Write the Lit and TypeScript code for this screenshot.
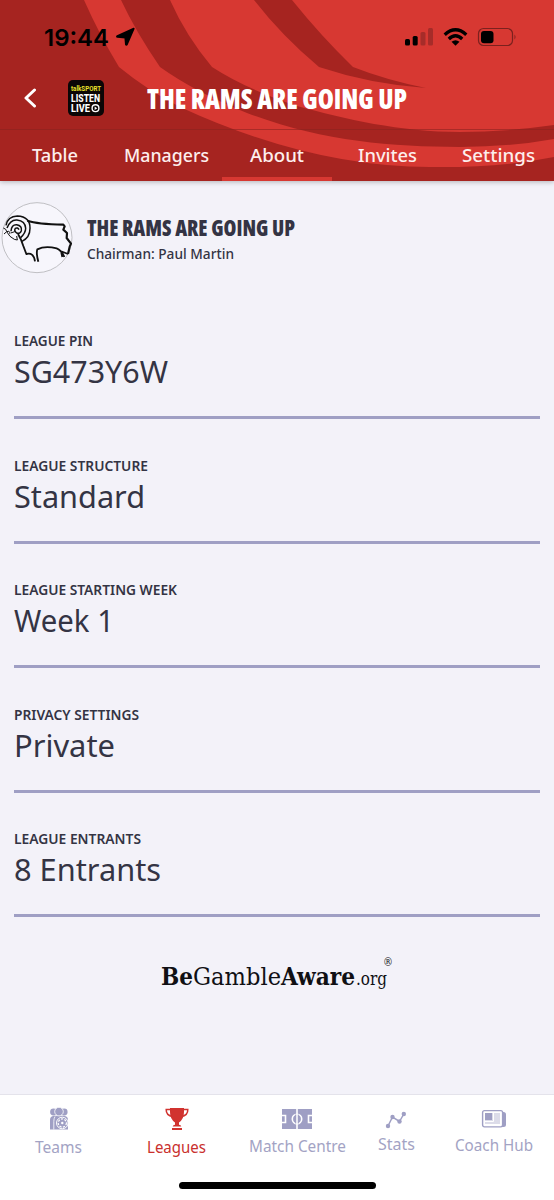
import { LitElement, html, css, svg } from "lit";
import { customElement, property } from "lit/decorators.js";

@customElement("fit-text")
class FitText extends LitElement {
  @property() text = "";
  @property({ type: Number }) w = 100;
  @property({ type: Number }) h = 20;
  @property({ type: Number }) base = 15;
  static styles = css`
    :host { display: block; }
    svg { display: block; overflow: visible; }
    text { fill: currentColor; white-space: pre; }
  `;
  render() {
    return html`<svg width=${this.w} height=${this.h}>
      <text x="0" y=${this.base} textLength=${this.w} lengthAdjust="spacingAndGlyphs">${this.text}</text>
    </svg>`;
  }
}

const fit = (text: string, w: number, h: number, base: number, cls: string) =>
  html`<fit-text class=${cls} .text=${text} .w=${w} .h=${h} .base=${base}></fit-text>`;

const tabs = [
  { label: "Table", w: 46 },
  { label: "Managers", w: 85 },
  { label: "About", w: 54, active: true },
  { label: "Invites", w: 59 },
  { label: "Settings", w: 73 },
];

const fields = [
  { label: "LEAGUE PIN", lw: 79, value: "SG473Y6W", vw: 154 },
  { label: "LEAGUE STRUCTURE", lw: 134, value: "Standard", vw: 131 },
  { label: "LEAGUE STARTING WEEK", lw: 163, value: "Week 1", vw: 100 },
  { label: "PRIVACY SETTINGS", lw: 125, value: "Private", vw: 101 },
  { label: "LEAGUE ENTRANTS", lw: 127, value: "8 Entrants", vw: 147 },
];

const teamsIcon = svg`<svg width="22" height="24" viewBox="0 0 22 24">
  <g fill="#9f9fc4">
    <circle cx="5.500" cy="5" r="3.400"/><circle cx="16.200" cy="5" r="3.400"/>
    <path d="M2 22.500V13q0-4 4-4.300h10q4 .3 4 4.300v9.500z"/>
    <circle cx="11" cy="4.600" r="4.300" stroke="#fff" stroke-width=".8"/>
  </g>
  <path d="M7 9.500q-1.200 2-1.200 5v8" fill="none" stroke="#fff" stroke-width=".8"/>
  <circle cx="14.300" cy="16" r="5.800" fill="#9f9fc4" stroke="#fff" stroke-width="1"/>
  <circle cx="14.300" cy="16" r="4.100" fill="none" stroke="#fff" stroke-width="1.200" stroke-dasharray="2.200 1.300"/>
  <circle cx="14.300" cy="16" r="1.200" fill="#fff"/>
</svg>`;

const cupIcon = svg`<svg width="24" height="24" viewBox="0 0 24 24">
  <path d="M5 1h14v4q0 7-5 10.500v2.300q2 .3 2.300 1.700H7.700q.3-1.400 2.300-1.700v-2.300Q5 12 5 5zM7 21h10v2H7z" fill="#d1332f"/>
  <path d="M5.500 2.500H1.200q-.3 6 6.800 7.200M18.500 2.500h4.300q.3 6-6.800 7.200" fill="none" stroke="#d1332f" stroke-width="1.500"/>
</svg>`;

const pitchIcon = svg`<svg width="30" height="22" viewBox="0 0 30 22">
  <path d="M0 1h30v20H0z" fill="#9f9fc4"/>
  <g fill="none" stroke="#fff" stroke-width="1.600">
    <path d="M15 0v22M0 7.500h3.500v7H0M30 7.500h-3.500v7H30"/><circle cx="15" cy="11" r="4.700"/>
  </g>
  <path d="M13.200 6.500h3.600v9h-3.600z" fill="#9f9fc4"/><path d="M15 6v10" stroke="#fff" stroke-width="1.500"/>
</svg>`;

const statsIcon = svg`<svg width="22" height="18" viewBox="0 0 22 18">
  <path d="M3 15 7.500 6 14.500 10.500 18.800 3" fill="none" stroke="#9f9fc4" stroke-width="1.500"/>
  <g fill="#9f9fc4"><circle cx="3" cy="15" r="2.200"/><circle cx="7.500" cy="6" r="2.200"/><circle cx="14.500" cy="10.500" r="2.200"/><circle cx="18.800" cy="3" r="2.200"/></g>
</svg>`;

const newsIcon = svg`<svg width="26" height="20" viewBox="0 0 26 20">
  <path d="M21 3h1.500q2.500 0 2.500 2.500v10q0 2.500-2.500 2.500H20z" fill="#9f9fc4"/>
  <rect x="1.600" y="1.600" width="20" height="16.300" rx="1.800" fill="#fff" stroke="#9f9fc4" stroke-width="1.400"/>
  <path d="M11 4h8v11H4v-4h7z" fill="#dcdce9"/>
  <path d="M4 4h7v7H4z" fill="#9f9fc4"/><path d="M12.500 4v8.500H4" fill="none" stroke="#fff"/>
</svg>`;

const nav = [
  { label: "Teams", w: 47, icon: teamsIcon, cls: "teams", base: 14 },
  { label: "Leagues", w: 59, icon: cupIcon, cls: "leagues", base: 14 },
  { label: "Match Centre", w: 97, icon: pitchIcon, cls: "match", base: 14 },
  { label: "Stats", w: 37, icon: statsIcon, cls: "stats", base: 14 },
  { label: "Coach Hub", w: 78, icon: newsIcon, cls: "hub", base: 14 },
];

@customElement("app-root")
class AppRoot extends LitElement {
  static styles = css`
    :host {
      display: flex; flex-direction: column; width: 554px; height: 1200px; overflow: hidden;
      background: #f3f2f9; color: #343444; font-family: "Noto Sans", "Open Sans", sans-serif;
    }
    header { position: relative; z-index: 1; flex: none; height: 181px; box-sizing: border-box;
      display: flex; flex-direction: column; background: #a62420; color: #fff; box-shadow: 0 1px 5px #0004; }
    .swirl { position: absolute; left: 0; top: 0; }
    .status { position: relative; height: 74px; box-sizing: border-box; padding: 24px 37px 0 44px;
      display: flex; align-items: flex-start; color: #000; }
    .clock { font: 600 23.500px Inter, sans-serif; }
    .arrow { margin: 3px 0 0 6px; }
    .radios { margin: 3px 0 0 auto; }
    .bar { position: relative; height: 55px; display: flex; align-items: flex-start; border-bottom: 1px solid #8a231f99; }
    .back { margin: 14px 0 0 22px; }
    .live { margin: 6px 0 0 30px; width: 36px; height: 36px; box-sizing: border-box; border-radius: 5px; background: #0b0606;
      padding: 4px 3px 0; display: flex; flex-direction: column; }
    .talk { color: #e9e12c; font: 700 8px Roboto, sans-serif; }
    .listen { font: 800 10px Roboto, sans-serif; }
    .row { display: flex; gap: 1px; }
    .title { margin: 9px 0 0 43px; font: 800 28.500px "Open Sans"; font-stretch: 75%; }
    .tabs { position: relative; flex: 1; display: grid; grid-template-columns: repeat(5, 1fr); }
    .tab { display: flex; justify-content: center; padding-top: 13px; font-size: 18.800px; font-weight: 550; color: #fdeeed; }
    .tab.active { border-bottom: 4px solid #d73832; }
    main { flex: 1; display: flex; flex-direction: column; }
    .league { display: flex; height: 113.500px; box-sizing: border-box; padding-top: 17px; gap: 10px; }
    .name { font: 800 23.500px "Open Sans"; font-stretch: 75%; margin-top: 16px; }
    .chair { font-size: 14.800px; font-weight: 500; margin-top: 7px; }
    .field { height: 124.500px; box-sizing: border-box; margin: 0 14px; padding-top: 35.500px; border-bottom: 3px solid #9f9fc4; }
    .label { font-size: 14.200px; font-weight: 600; }
    .value { font-size: 31px; font-weight: 400; margin-top: 8px; }
    .aware { display: flex; margin: 35px 0 0 161px; color: #101014; font-family: "DejaVu Serif", serif; font-size: 24px; }
    .bold { font-weight: 700; }
    .org { font-size: 19px; margin-left: 1px; }
    .reg { font-size: 11px; margin-left: -4px; }
    nav { position: relative; flex: none; height: 106px; box-sizing: border-box; background: #fff; border-top: 1px solid #e4e3eb;
      color: #a3a3c4; }
    .items { display: grid; grid-template-columns: 116px 120px 122px 76px 120px; }
    .item { display: flex; flex-direction: column; align-items: center; font-size: 16px; }
    .item svg { display: block; flex: none; }
    .teams { padding: 12px 0 0 1px; gap: 8px; }
    .leagues { padding: 12px 0 0 1px; gap: 8px; color: #c9302d; }
    .match { padding-top: 13px; gap: 8px; }
    .stats { padding-top: 16px; gap: 7px; }
    .hub { padding-top: 14px; gap: 8px; }
    .home { width: 197px; height: 7px; border-radius: 4px; background: #000; position: absolute; left: 179px; top: 87px; }
  `;

  render() {
    return html`
      <header>
        <svg class="swirl" width="554" height="180" viewBox="0 0 554 180">
          <path fill="#d73832" d="M84 0Q99 34 119 67Q147 90 180 107Q310 167 430 167Q500 168 554 157V0Z"/>
          <path fill="#a62420" d="M121 0Q136 32 160 67Q195 92 247 113C320 141 390 147 460 147Q510 147 554 139V125Q505 132 460 132C400 132 345 119 297 106Q246 89 212 67Q186 36 170 0Z"/>
          <path fill="#a62420" d="M254 0Q282 36 319 67Q370 84 426 88Q386 80 353 67Q321 36 292 0Z"/>
        </svg>
        <div class="status">
          ${fit("19:44", 65, 30, 22, "clock")}
          <svg class="arrow" width="20" height="20" viewBox="0 0 20 20"><path d="M18.800 1.600 12 17.500Q11.300 18.500 10.800 17.400L10.200 10.800 2.500 10Q1.300 9.600 2.300 8.900z" stroke="#000" stroke-width="1.600" stroke-linejoin="round"/></svg>
          <svg class="radios" width="112" height="20" viewBox="405 27 112 20">
            <rect x="405" y="39" width="5" height="6.500" rx="1.500"/><rect x="412.700" y="36" width="5" height="9.500" rx="1.500"/>
            <g fill="#a62c29"><rect x="420.500" y="32" width="5" height="13.500" rx="1.500"/><rect x="428" y="28" width="5" height="17.500" rx="1.500"/></g>
            <g fill="none" stroke="#000" stroke-width="3.300"><path d="M444.700 34.700Q455.500 24.800 466.300 34.700M448.800 39Q455.500 32.600 462.200 39"/></g>
            <path d="M451.500 41.800q4-3.200 8 0l-4 4z"/>
            <rect x="478.500" y="28.500" width="34" height="17" rx="5" fill="none" stroke="#7b211e" stroke-width="1.200"/>
            <rect x="481" y="31" width="12.500" height="12.300" rx="3"/><path d="M514.500 34.500q2 2.500 0 5z" fill="#7b211e"/>
          </svg>
        </div>
        <div class="bar">
          <svg class="back" width="16" height="20" viewBox="0 0 16 20"><path d="M12.500 2 4 10l8.500 8" fill="none" stroke="#fff" stroke-width="3" stroke-linecap="round" stroke-linejoin="round"/></svg>
          <div class="live">
            ${fit("talkSPORT", 30, 9, 6.8, "talk")}
            ${fit("LISTEN", 29, 10, 8.5, "listen")}
            <div class="row">
              ${fit("LIVE", 19, 10, 8.8, "listen")}
              <svg width="9" height="10" viewBox="0 0 9 10"><circle cx="4.500" cy="5.200" r="3.400" fill="none" stroke="#fff" stroke-width="1.400"/><path d="M3.600 3.500 6.300 5.200 3.600 6.900z" fill="#fff"/></svg>
            </div>
          </div>
          ${fit("THE RAMS ARE GOING UP", 260, 40, 26, "title")}
        </div>
        <div class="tabs">
          ${tabs.map((t) => html`<div class="tab ${t.active ? "active" : ""}">${fit(t.label, t.w, 24, 18.5, "")}</div>`)}
        </div>
      </header>
      <main>
        <div class="league">
          <svg width="77" height="80" viewBox="0 0 231 240">
            <circle cx="111" cy="119" r="105" fill="#f7f6fc" stroke="#b4b4b8" stroke-width="2.500"/>
            <g fill="none" stroke="#111" stroke-width="5.500" stroke-linejoin="round">
              <path stroke-width="6.500" d="M82 68Q112 78 190 80L194 85L190 95L201 105L200 120L213 137L209 146L204 168"/>
              <path d="M54 108Q64 124 70 144L79 168Q101 162 105 190M115 191Q108 166 112 154Q135 142 170 151Q184 156 193 177M181 159Q193 164 204 168M184 164l3 13"/>
              <path d="M18 82Q23 55 52 54Q91 56 90 91Q90 119 66 130M21 90Q31 64 51 66Q76 69 77 91Q77 105 62 119M33 100Q34 79 50 80Q67 83 64 98Q60 109 50 105Q41 98 46 91Q53 87 57 95" stroke-width="4.500"/>
              <path d="M10 90Q20 93 20 101L12 108M20 101L30 115L43 124L52 126L50 114M21 101Q30 97 29 107M32 105L44 101" stroke-width="3"/>
            </g>
          </svg>
          <div>
            ${fit("THE RAMS ARE GOING UP", 208, 26, 21.500, "name")}
            ${fit("Chairman: Paul Martin", 147, 18, 12, "chair")}
          </div>
        </div>
        ${fields.map((f) => html`<div class="field">
          ${fit(f.label, f.lw, 18, 16, "label")}
          ${fit(f.value, f.vw, 34, 27, "value")}
        </div>`)}
        <div class="aware">
          ${fit("Be", 32, 30, 33, "bold")}${fit("Gamble", 88, 30, 33, "")}${fit("Aware", 74, 30, 33, "bold")}${fit(".org", 31, 30, 33, "org")}${fit("®", 10, 14, 14, "reg")}
        </div>
      </main>
      <nav>
        <div class="items">
          ${nav.map((n) => html`<div class="item ${n.cls}">${n.icon}${fit(n.label, n.w, 20, n.base, "")}</div>`)}
        </div>
        <div class="home"></div>
      </nav>
    `;
  }
}
